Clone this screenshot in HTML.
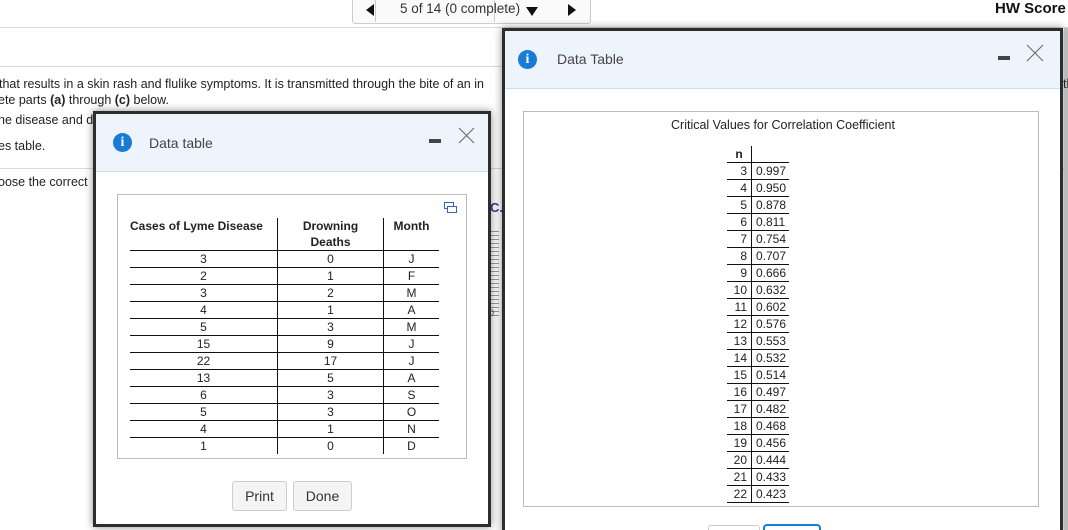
<!DOCTYPE html>
<html style="overflow:hidden;height:530px"><head><style>
html,body{margin:0;padding:0}
#w{width:1068px;height:530px;overflow:hidden;background:#fff;font-family:"Liberation Sans",Arial,sans-serif;position:relative;color:#222}
.a{position:absolute}
.t{font-size:12.5px;white-space:nowrap;color:#222}
.dlg{position:absolute;border:3px solid #2d2d2d;background:#fff;box-shadow:0 0 8px rgba(0,0,0,.45)}
.hd{position:absolute;left:0;right:0;top:0;background:#eef4fc;border-bottom:1px solid #c8ddf0}
.ic{position:absolute;width:19px;height:19px;border-radius:50%;background:#1a7bd6;color:#fff;font:bold 14px "Liberation Serif",serif;text-align:center;line-height:19px}
.ttl{position:absolute;font-size:14px;color:#444}
.min{position:absolute;width:12px;height:4px;background:#444}
table{border-collapse:collapse}
.lt td{font-size:12px;text-align:center;height:16px;padding:0;border-bottom:1.5px solid #111;line-height:15px}
.lt td+td{border-left:1px solid #111}
.lt th{font-size:12px;font-weight:bold;vertical-align:top;border-bottom:1.5px solid #111;padding:0;line-height:16px;color:#222}
.lt th+th{border-left:1px solid #111}
.rt td{font-size:12px;height:16px;padding:0;border-bottom:1.5px solid #111;line-height:15px}
.rt td:first-child{text-align:right;padding-right:4px;width:20px}
.rt td+td{border-left:1px solid #111;padding-left:4px;width:33px}
.btn{position:absolute;border:1px solid #ccc;border-radius:3px;background:#f4f4f4;font-size:14px;color:#333;text-align:center;line-height:28px}
</style></head><body><div id="w">
<!-- top nav -->
<div class="a" style="left:352px;top:-2px;width:237px;height:24px;border:1px solid #ccc;border-radius:3px;background:#fafafa"></div>
<div class="a" style="left:375px;top:0;width:1px;height:22px;background:#ccc"></div>
<div class="a" style="left:494px;top:0;width:1px;height:22px;background:#ccc"></div>
<div class="a" style="left:366px;top:4px;width:0;height:0;border-top:6px solid transparent;border-bottom:6px solid transparent;border-right:8px solid #111"></div>
<div class="a t" style="left:400px;top:1px;font-size:13.5px;color:#333">5 of 14 (0 complete)</div>
<div class="a" style="left:526px;top:7px;border-left:6px solid transparent;border-right:6px solid transparent;border-top:9px solid #111"></div>
<div class="a" style="left:568px;top:4px;border-top:6px solid transparent;border-bottom:6px solid transparent;border-left:8px solid #111"></div>
<div class="a" style="left:995px;top:0px;font-size:15px;font-weight:bold;color:#111">HW Score</div>
<div class="a" style="left:0;top:27px;width:1068px;height:1px;background:#d6dbe3"></div>
<div class="a" style="left:0;top:66px;width:1068px;height:1px;background:#d6dbe3"></div>
<div class="a" style="left:0;top:168px;width:1068px;height:1px;background:#d6dbe3"></div>
<div class="a t" style="left:-1px;top:77px">that results in a skin rash and flulike symptoms. It is transmitted through the bite of an in</div>
<div class="a t" style="left:-2px;top:93px">ete parts <b>(a)</b> through <b>(c)</b> below.</div>
<div class="a t" style="left:-2px;top:113px">he disease and d</div>
<div class="a t" style="left:-2px;top:139px">es table.</div>
<div class="a t" style="left:-2px;top:175px">oose the correct</div>
<div class="a" style="left:490px;top:200px;color:#2a3fa0;font-weight:bold;font-size:13px">C.</div>
<div class="a" style="left:488px;top:228px;width:10px;height:90px;border-left:1px solid #666;background:repeating-linear-gradient(#fff 0 3px,#999 3px 4px)"></div>
<div class="a" style="left:489px;top:308px;font-size:9px;color:#555">0</div>

<!-- right dialog -->
<div class="dlg" style="left:502px;top:28px;width:555px;height:502px;border-bottom:none;overflow:hidden">
 <div class="hd" style="height:57px"></div>
 <div class="ic" style="left:13px;top:19px">i</div>
 <div class="ttl" style="left:52px;top:20px">Data Table</div>
 <div class="min" style="left:493px;top:25px"></div>
 <svg class="a" style="left:521px;top:13px" width="18" height="18"><path d="M1 1L17 17M17 1L1 17" stroke="#666" stroke-width="1"/></svg>
 <div class="a" style="left:18px;top:80px;width:514px;height:394px;border:1px solid #bbb"></div>
 <div class="a" style="left:0;width:556px;top:87px;text-align:center;font-size:12.5px;color:#222"><span>Critical Values for Correlation Coefficient</span></div>
 <table class="rt a" style="left:222px;top:115px">
  <tr><td style="font-weight:bold;text-align:center;padding-right:0;width:24px">n</td><td></td></tr>
  <tr><td>3</td><td>0.997</td></tr><tr><td>4</td><td>0.950</td></tr><tr><td>5</td><td>0.878</td></tr><tr><td>6</td><td>0.811</td></tr><tr><td>7</td><td>0.754</td></tr><tr><td>8</td><td>0.707</td></tr><tr><td>9</td><td>0.666</td></tr><tr><td>10</td><td>0.632</td></tr><tr><td>11</td><td>0.602</td></tr><tr><td>12</td><td>0.576</td></tr><tr><td>13</td><td>0.553</td></tr><tr><td>14</td><td>0.532</td></tr><tr><td>15</td><td>0.514</td></tr><tr><td>16</td><td>0.497</td></tr><tr><td>17</td><td>0.482</td></tr><tr><td>18</td><td>0.468</td></tr><tr><td>19</td><td>0.456</td></tr><tr><td>20</td><td>0.444</td></tr><tr><td>21</td><td>0.433</td></tr><tr><td>22</td><td>0.423</td></tr>
 </table>
 <div class="a" style="left:203px;top:494px;width:50px;height:20px;border:1px solid #ccc;border-radius:3px"></div>
 <div class="a" style="left:258px;top:493px;width:54px;height:20px;border:2px solid #1a7bd6;border-radius:4px"></div>
</div>
<div class="a" style="left:1064px;top:28px;width:4px;height:502px;background:#bbb"></div>
<div class="a t" style="left:1063px;top:77px">th</div>

<!-- left dialog -->
<div class="dlg" style="left:93px;top:111px;width:392px;height:410px">
 <div class="hd" style="height:57px"></div>
 <div class="ic" style="left:17px;top:19px">i</div>
 <div class="ttl" style="left:53px;top:21px">Data table</div>
 <div class="min" style="left:333px;top:25px"></div>
 <svg class="a" style="left:362px;top:13px" width="17" height="17"><path d="M1 1L16 16M16 1L1 16" stroke="#666" stroke-width="1"/></svg>
 <div class="a" style="left:21px;top:80px;width:348px;height:263px;border:1px solid #bbb"></div>
 <svg class="a" style="left:348px;top:88px" width="13" height="11"><rect x="0.5" y="0.5" width="9" height="6" fill="none" stroke="#3a63b8"/><rect x="3.5" y="4.5" width="9" height="6" fill="#fff" stroke="#3a63b8"/></svg>
 <table class="lt a" style="left:34px;top:104px">
  <tr><th style="width:147px;height:32px;text-align:left">Cases of Lyme Disease</th><th style="width:105px;text-align:center">Drowning<br>Deaths</th><th style="width:55px;text-align:center">Month</th></tr>
  <tr><td>3</td><td>0</td><td>J</td></tr><tr><td>2</td><td>1</td><td>F</td></tr><tr><td>3</td><td>2</td><td>M</td></tr><tr><td>4</td><td>1</td><td>A</td></tr><tr><td>5</td><td>3</td><td>M</td></tr><tr><td>15</td><td>9</td><td>J</td></tr><tr><td>22</td><td>17</td><td>J</td></tr><tr><td>13</td><td>5</td><td>A</td></tr><tr><td>6</td><td>3</td><td>S</td></tr><tr><td>5</td><td>3</td><td>O</td></tr><tr><td>4</td><td>1</td><td>N</td></tr><tr><td style="border-bottom:none">1</td><td style="border-bottom:none">0</td><td style="border-bottom:none">D</td></tr>
 </table>
 <div class="btn" style="left:136px;top:367px;width:53px">Print</div>
 <div class="btn" style="left:197px;top:367px;width:57px">Done</div>
</div>
</div></body></html>
